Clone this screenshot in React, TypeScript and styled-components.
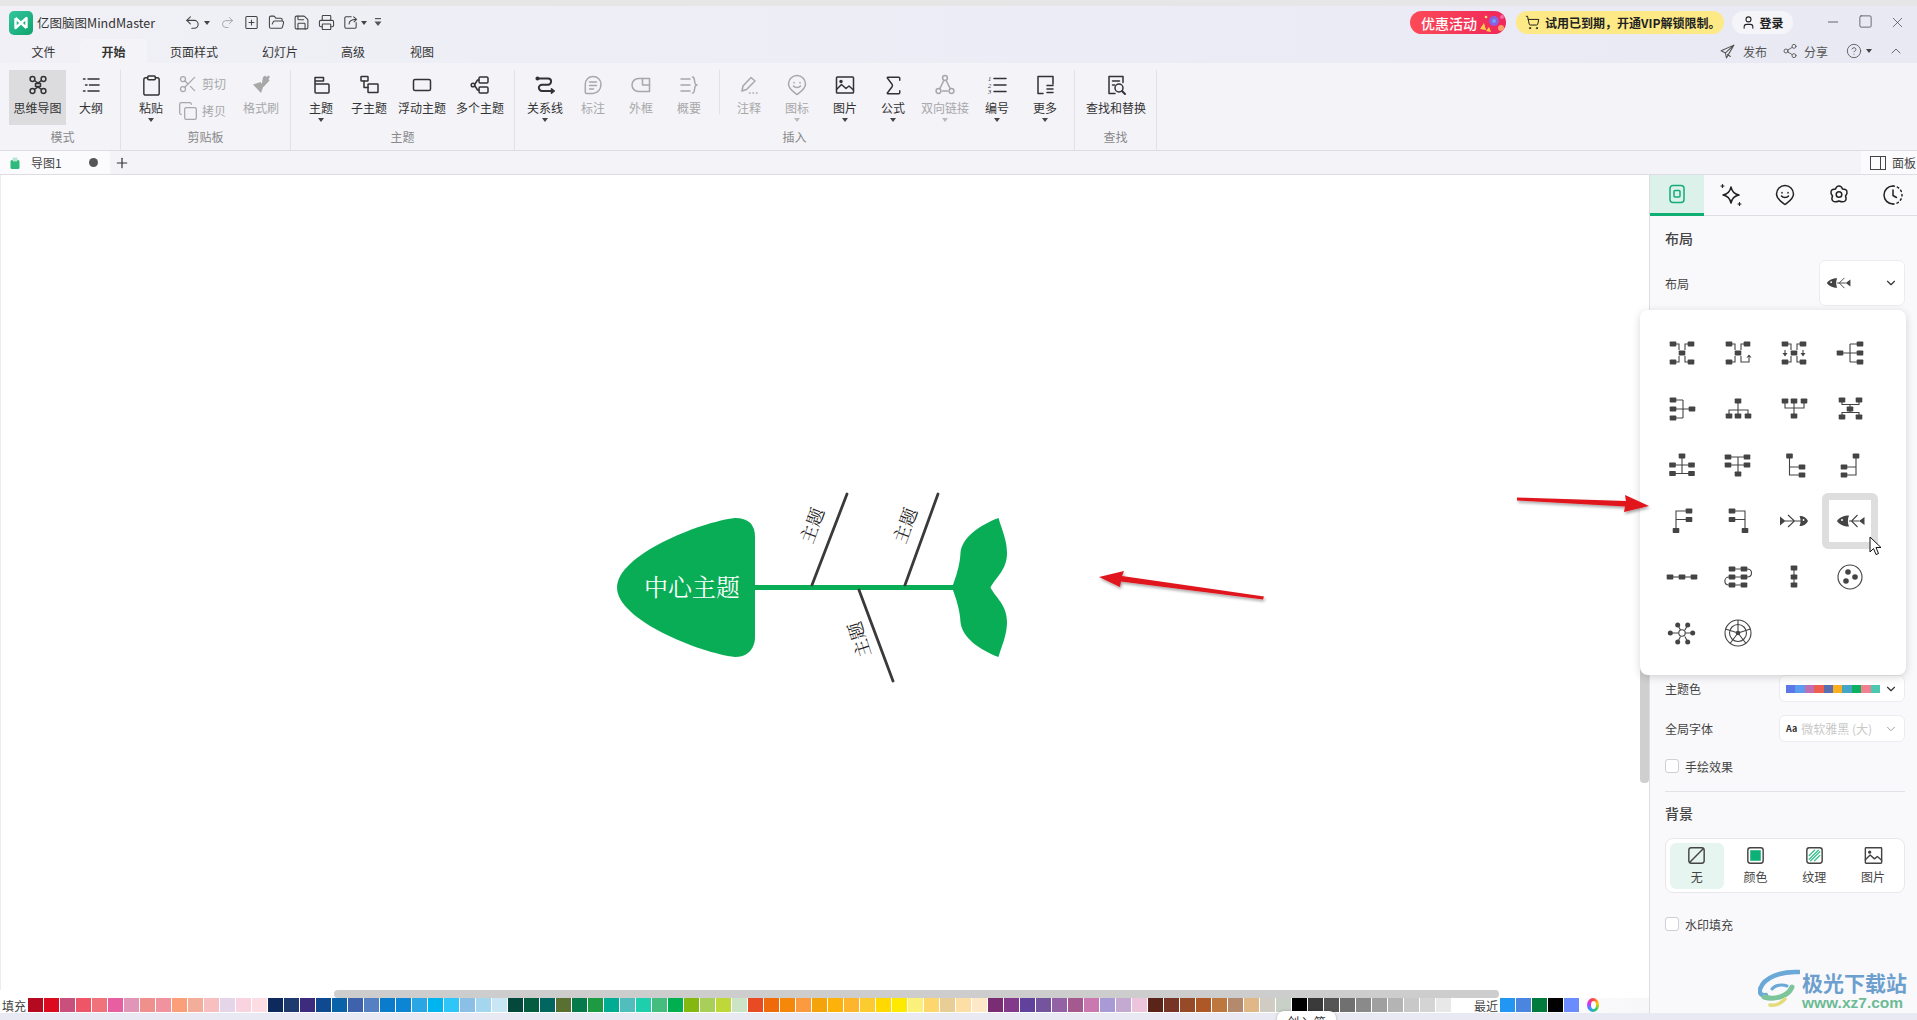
import React from 'react';
import styled, { createGlobalStyle } from 'styled-components';
import {
  ChevronDown,
  ChevronUp,
  CircleHelp,
  Clipboard,
  Copy,
  FolderOpen,
  Image,
  Minus,
  Plus,
  Printer,
  Redo2,
  Save,
  Scissors,
  Share2,
  ShoppingCart,
  Sigma,
  Square,
  Undo2,
  User,
  X,
} from 'lucide-react';

const FONT = '"Noto Sans CJK SC", "Noto Sans", sans-serif';
const SERIF = '"Noto Serif CJK SC", "Liberation Serif", "Noto Sans CJK SC", serif';

const GlobalStyle = createGlobalStyle`
  html, body {
    margin: 0;
    padding: 0;
    background: #fff;
    font-family: ${FONT};
    font-size: 12px;
    color: #333;
  }
  * { box-sizing: border-box; }
`;

const AppShell = styled.div`
  position: relative;
  width: 1917px;
  height: 1020px;
  overflow: hidden;
  display: flex;
  flex-direction: column;
`;

const TopBand = styled.div`
  height: 6px;
  background: #e6e6e6;
`;

const Chrome = styled.div`
  background: linear-gradient(90deg, #f0f0f6 0%, #ebecf5 60%, #e8e9f3 100%);
`;

const TitleBar = styled.div`
  height: 33px;
  display: flex;
  align-items: center;
`;

const LogoBox = styled.div`
  margin-left: 9px;
  width: 24px;
  height: 24px;
  flex: none;
`;

const AppTitle = styled.div`
  margin-left: 4px;
  width: 143px;
  flex: none;
  font-size: 12.5px;
  color: #333;
  white-space: nowrap;
`;

const QuickBtn = styled.div<{ $w?: number; $ml?: number; $off?: boolean }>`
  width: ${(p) => p.$w ?? 25}px;
  margin-left: ${(p) => p.$ml ?? 0}px;
  flex: none;
  display: flex;
  align-items: center;
  justify-content: center;
  color: ${(p) => (p.$off ? '#999' : '#444')};
`;

const Caret = styled.span<{ $off?: boolean }>`
  display: block;
  width: 0;
  height: 0;
  border-left: 3px solid transparent;
  border-right: 3px solid transparent;
  border-top: 4px solid ${(p) => (p.$off ? '#bbb' : '#444')};
`;

const TitleRight = styled.div`
  margin-left: auto;
  display: flex;
  align-items: center;
`;

const PromoPill = styled.div`
  width: 96px;
  height: 23px;
  border-radius: 12px;
  background: linear-gradient(90deg, #fb4a57, #f0275a);
  color: #fff;
  font-size: 14px;
  font-weight: 500;
  display: flex;
  align-items: center;
  padding-left: 11px;
  position: relative;
  overflow: hidden;
  white-space: nowrap;
`;

const Confetti = styled.svg`
  position: absolute;
  right: 0;
  top: 0;
`;

const VipPill = styled.div`
  margin-left: 10px;
  width: 208px;
  height: 23px;
  border-radius: 12px;
  background: #fdea86;
  color: #222;
  font-weight: 700;
  display: flex;
  align-items: center;
  gap: 5px;
  padding-left: 9px;
  white-space: nowrap;
`;

const LoginPill = styled.div`
  margin-left: 8px;
  width: 61px;
  height: 23px;
  border-radius: 12px;
  background: #f4f4f9;
  font-weight: 700;
  color: #222;
  display: flex;
  align-items: center;
  justify-content: center;
  gap: 3px;
`;

const WindowButtons = styled.div`
  margin-left: 24px;
  margin-right: 4px;
  display: flex;
`;

const WindowBtn = styled.div`
  width: 32px;
  display: flex;
  justify-content: center;
  color: #444;
`;

const MenuRow = styled.div`
  height: 24px;
  padding-left: 7px;
  display: flex;
  align-items: stretch;
`;

const MenuTab = styled.div<{ $w: number; $active?: boolean }>`
  width: ${(p) => p.$w}px;
  display: flex;
  align-items: center;
  justify-content: center;
  border-radius: 5px 5px 0 0;
  background: ${(p) => (p.$active ? '#f3f3f8' : 'transparent')};
  font-weight: ${(p) => (p.$active ? 700 : 400)};
  color: #333;
`;

const MenuRight = styled.div`
  margin-left: auto;
  padding-right: 13px;
  display: flex;
  align-items: center;
  color: #555;
`;

const MenuAction = styled.span<{ $ml?: number }>`
  margin-left: ${(p) => p.$ml ?? 0}px;
  display: flex;
  align-items: center;
`;

const Ribbon = styled.div`
  height: 88px;
  padding-top: 7px;
  display: flex;
  background: #f3f3f8;
  border-bottom: 1px solid #dedee2;
`;

const RibbonGroup = styled.div<{ $w: number }>`
  width: ${(p) => p.$w}px;
  flex: none;
  border-right: 1px solid #e2e2e6;
  display: flex;
  flex-direction: column;
`;

const GroupRow = styled.div<{ $pl: number }>`
  height: 55px;
  padding-left: ${(p) => p.$pl}px;
  display: flex;
`;

const GroupLabel = styled.div<{ $shift?: number }>`
  margin-top: 4px;
  height: 16px;
  line-height: 16px;
  text-align: center;
  color: #888;
  padding-left: ${(p) => p.$shift ?? 0}px;
`;

const RibbonItem = styled.div<{ $w: number; $off?: boolean; $on?: boolean }>`
  width: ${(p) => p.$w}px;
  height: 55px;
  flex: none;
  display: flex;
  flex-direction: column;
  align-items: center;
  background: ${(p) => (p.$on ? '#dcdcdf' : 'transparent')};
  color: ${(p) => (p.$off ? '#a8a8a8' : '#333')};
`;

const ItemIcon = styled.div`
  height: 30px;
  display: flex;
  align-items: center;
  justify-content: center;
`;

const ItemLabel = styled.div`
  height: 16px;
  line-height: 16px;
  white-space: nowrap;
`;

const ItemCaret = styled.div`
  height: 8px;
  display: flex;
  align-items: center;
`;

const ClipColumn = styled.div`
  width: 50px;
  margin: 0 8px 0 5px;
  flex: none;
  display: flex;
  flex-direction: column;
`;

const ClipRow = styled.div`
  height: 27px;
  display: flex;
  align-items: center;
  gap: 4px;
  color: #a8a8a8;
`;

const RibbonDivider = styled.div`
  width: 12px;
  height: 44px;
  flex: none;
  display: flex;
  justify-content: center;
  &::before {
    content: '';
    width: 1px;
    background: #e2e2e6;
  }
`;

const DocBar = styled.div`
  height: 24px;
  display: flex;
  justify-content: space-between;
  background: #f3f3f8;
  border-bottom: 1px solid #dedee2;
`;

const DocLeft = styled.div`
  display: flex;
  align-items: center;
`;

const DocTab = styled.div`
  width: 110px;
  height: 23px;
  background: #fbfbfd;
  display: flex;
  align-items: center;
  padding-left: 10px;
  color: #444;
`;

const DocName = styled.span`
  margin-left: 11px;
`;

const DocDot = styled.span`
  margin-left: auto;
  margin-right: 12px;
  width: 9px;
  height: 9px;
  border-radius: 50%;
  background: #555;
`;

const AddDoc = styled.div`
  margin-left: 4px;
  display: flex;
  color: #333;
`;

const PanelToggle = styled.div`
  width: 56px;
  height: 23px;
  background: #fbfbfd;
  display: flex;
  align-items: center;
  padding-left: 9px;
  gap: 6px;
  white-space: nowrap;
  overflow: hidden;
  color: #444;
`;

const Main = styled.div`
  height: 838px;
  display: flex;
`;

const LeftColumn = styled.div`
  flex: 1;
  min-width: 0;
  display: flex;
  flex-direction: column;
`;

const Canvas = styled.div`
  flex: 1;
  position: relative;
  background: #fff;
  border-left: 1px solid #ececec;
`;

const FishDiagram = styled.svg`
  position: absolute;
  left: 599px;
  top: 310px;
`;

const TopicText = styled.text`
  font-family: ${SERIF};
`;

const VScrollThumb = styled.div`
  position: absolute;
  left: 1639px;
  top: 300px;
  width: 9px;
  height: 308px;
  border-radius: 0 0 4px 4px;
  background: #cfcfcf;
`;

const HScrollStrip = styled.div`
  height: 8px;
  padding-left: 334px;
  background: #fff;
`;

const HScrollThumb = styled.div`
  width: 1165px;
  height: 8px;
  border-radius: 4px;
  background: #cdcdcd;
`;

const ColorBar = styled.div`
  height: 15px;
  display: flex;
  background: linear-gradient(90deg, #fff 90%, #f7f7f9 100%);
`;

const ColorLabel = styled.div<{ $w: number; $ml?: number }>`
  width: ${(p) => p.$w}px;
  margin-left: ${(p) => p.$ml ?? 0}px;
  flex: none;
  line-height: 15px;
  padding-left: 2px;
  color: #444;
  white-space: nowrap;
`;

const Swatch = styled.div<{ $c: string }>`
  width: 16px;
  height: 14px;
  flex: none;
  background: ${(p) => p.$c};
  border-right: 1px solid #fff;
`;

const ColorRing = styled.div`
  margin-left: 7px;
  width: 12px;
  height: 14px;
  border-radius: 50%;
  background: conic-gradient(#f44, #fc0, #3c6, #39f, #c3f, #f44);
  display: flex;
  align-items: center;
  justify-content: center;
  &::after {
    content: '';
    width: 5px;
    height: 8px;
    border-radius: 50%;
    background: #fff;
  }
`;

const StatusStrip = styled.div`
  height: 7px;
  background: #e9e9f3;
`;

const Panel = styled.div`
  width: 268px;
  flex: none;
  overflow: hidden;
  background: #f9f9fb;
  border-left: 1px solid #dddde0;
`;

const PanelTabs = styled.div`
  height: 41px;
  display: flex;
  border-bottom: 1px solid #dedee2;
`;

const PanelTab = styled.div<{ $active?: boolean }>`
  width: 54px;
  flex: none;
  height: ${(p) => (p.$active ? 41 : 40)}px;
  display: flex;
  align-items: center;
  justify-content: center;
  color: ${(p) => (p.$active ? '#12ab79' : '#222')};
  background: ${(p) => (p.$active ? '#dcf1ea' : 'transparent')};
  border-bottom: ${(p) => (p.$active ? '3px solid #0fae72' : 'none')};
`;

const PanelBody = styled.div`
  padding: 12px 12px 0 15px;
`;

const SectionTitle = styled.div<{ $mt?: number }>`
  margin-top: ${(p) => p.$mt ?? 0}px;
  height: 20px;
  line-height: 20px;
  font-size: 14px;
  font-weight: 500;
  color: #444;
`;

const FieldRow = styled.div<{ $mt: number; $h: number }>`
  margin-top: ${(p) => p.$mt}px;
  height: ${(p) => p.$h}px;
  display: flex;
  align-items: center;
  justify-content: space-between;
  color: #444;
`;

const SelectBox = styled.div<{ $w: number }>`
  width: ${(p) => p.$w}px;
  height: 100%;
  background: #fff;
  border: 1px solid #ececf0;
  border-radius: 6px;
  display: flex;
  align-items: center;
  padding: 0 6px;
  color: #333;
`;

const SelectChevron = styled.span`
  margin-left: auto;
  display: flex;
`;

const ThemeStrip = styled.div`
  display: flex;
`;

const ThemeChip = styled.div<{ $c: string }>`
  width: 9.4px;
  height: 8px;
  background: ${(p) => p.$c};
`;

const FontHint = styled.span`
  font-size: 9px;
  font-weight: 700;
  margin-right: 4px;
`;

const FontName = styled.span`
  color: #c8c8c8;
`;

const CheckRow = styled.div<{ $mt: number }>`
  margin-top: ${(p) => p.$mt}px;
  height: 16px;
  display: flex;
  align-items: center;
  gap: 6px;
  color: #444;
`;

const CheckBox = styled.span`
  width: 14px;
  height: 14px;
  background: #fff;
  border: 1px solid #cfcfd4;
  border-radius: 3px;
`;

const PanelDivider = styled.div`
  margin-top: 17px;
  height: 1px;
  background: #e2e2e6;
`;

const BgCard = styled.div`
  margin-top: 15px;
  width: 240px;
  height: 55px;
  padding: 4px;
  display: flex;
  gap: 5px;
  background: #fff;
  border: 1px solid #e8e8ec;
  border-radius: 8px;
`;

const BgOption = styled.div<{ $active?: boolean }>`
  width: 54px;
  height: 46px;
  display: flex;
  flex-direction: column;
  align-items: center;
  padding-top: 1px;
  border-radius: 6px;
  background: ${(p) => (p.$active ? '#e6f5ef' : 'transparent')};
  color: #444;
`;

const BgLabel = styled.div`
  margin-top: 2px;
  line-height: 16px;
`;

const LayoutPopup = styled.div`
  position: absolute;
  left: 1640px;
  top: 310px;
  width: 266px;
  height: 365px;
  padding: 15px 0 0 14px;
  display: grid;
  grid-template-columns: repeat(4, 56px);
  grid-auto-rows: 56px;
  background: #fff;
  border-radius: 8px;
  box-shadow: 0 2px 8px rgba(0, 0, 0, 0.16);
`;

const LayoutCell = styled.div<{ $active?: boolean }>`
  display: flex;
  align-items: center;
  justify-content: center;
  color: #444;
  border-radius: 6px;
  border: ${(p) => (p.$active ? '7px solid #dedede' : 'none')};
`;

const PointerCursor = styled.svg`
  position: absolute;
  left: 1869px;
  top: 536px;
`;

const AnnotationLayer = styled.svg`
  position: absolute;
  left: 0;
  top: 0;
  pointer-events: none;
`;

const Tooltip = styled.div`
  position: absolute;
  left: 1277px;
  top: 1011px;
  width: 59px;
  height: 22px;
  background: #fff;
  border-radius: 7px;
  box-shadow: 0 0 3px rgba(0, 0, 0, 0.25);
  text-align: center;
  line-height: 22px;
  white-space: nowrap;
  color: #333;
`;

const Watermark = styled.div`
  position: absolute;
  left: 1758px;
  top: 969px;
  display: flex;
  gap: 2px;
`;

const WatermarkText = styled.div`
  display: flex;
  flex-direction: column;
  margin-top: 1px;
`;

const WatermarkName = styled.div`
  font-size: 21px;
  line-height: 24px;
  font-weight: 700;
  color: #6d9fce;
  white-space: nowrap;
`;

const WatermarkUrl = styled.div`
  font-family: 'Liberation Sans', sans-serif;
  font-size: 15.5px;
  line-height: 18px;
  font-weight: 700;
  color: #6cbb94;
`;

/* ribbon drawings */
const Ico: React.FC<{ size?: number; children: React.ReactNode }> = ({ size = 24, children }) => (
  <svg width={size} height={size} viewBox="0 0 24 24" fill="none" stroke="currentColor" strokeWidth={1.5} strokeLinecap="round" strokeLinejoin="round">
    {children}
  </svg>
);

const MindmapIcon = () => (
  <Ico>
    <circle cx="6.5" cy="6" r="2.4" />
    <circle cx="17.5" cy="6" r="2.4" />
    <circle cx="6.5" cy="18" r="2.4" />
    <circle cx="17.5" cy="18" r="2.4" />
    <path d="M8.5 7.5 12 10l3.5-2.5M8.5 16.5 12 14l3.5 2.5M9.5 10.5h5v3h-5z" />
  </Ico>
);
const OutlineIcon = () => (
  <Ico>
    <path d="M4.5 6H6M9 6h11M6.5 12H8M10.500 12H20M4.500 18H6M9 18h11" />
  </Ico>
);
const TopicIcon = () => (
  <Ico>
    <path d="M6 11V4.500h8.500V8M6 8h8" />
    <rect x="6" y="11" width="14" height="9" rx="1" />
  </Ico>
);
const SubTopicIcon = () => (
  <Ico>
    <rect x="4" y="3.500" width="7" height="4.500" rx="0.600" />
    <path d="M7 8v6.500h4" />
    <rect x="11" y="11" width="10" height="8.500" rx="0.600" />
  </Ico>
);
const FloatIcon = () => (
  <Ico>
    <rect x="3.500" y="6.500" width="17" height="11" rx="1.600" />
  </Ico>
);
const MultiIcon = () => (
  <Ico>
    <rect x="11" y="4" width="9" height="6" rx="1.200" />
    <rect x="11" y="14" width="9" height="6" rx="1.200" />
    <circle cx="5" cy="12" r="1.800" />
    <path d="M11 7H9.500L7 11M11 17H9.500L7 13" />
  </Ico>
);
const RelationIcon = () => (
  <Ico>
    <circle cx="4.500" cy="5.500" r="1.300" fill="currentColor" />
    <path strokeWidth={2} d="M5 5.500h10a3 3 0 0 1 0 6.200H9a3 3 0 0 0 0 6.300h9.500" />
    <path d="m18.500 15.800 2.800 2.200-2.800 2.200z" fill="currentColor" />
  </Ico>
);
const CalloutIcon = () => (
  <Ico>
    <path d="M12 3.500c4.600 0 8 3.200 8 7.800 0 5.200-3.600 9.200-8 9.200H5.500c-.6 0-1.200-.5-1.200-1.200v-8c0-4.600 3.200-7.800 7.700-7.800z" />
    <path d="M8.500 9h7M8.500 12.500h7M8.500 16h4" />
  </Ico>
);
const FrameIcon = () => (
  <Ico>
    <path d="M9.500 5.500h11v13h-11a6.500 6.500 0 0 1 0-13z" />
    <path d="M13.500 5.500V12h7" />
  </Ico>
);
const SummaryIcon = () => (
  <Ico>
    <path d="M4 6h9M4 12h9M4 18h9M15.500 4c3.500 0 .5 8 4.500 8-4 0-1 8-4.500 8" />
  </Ico>
);
const NoteIcon = () => (
  <Ico>
    <path d="m5 18 1-5 8-8.500 4 3.500-8.500 8.500z" />
    <path d="M12.500 20h.5M16 20h.5M19.500 20h.5" />
  </Ico>
);
const PinFaceIcon: React.FC<{ size?: number }> = ({ size }) => (
  <Ico size={size}>
    <path d="M12 2.500a8.500 8.500 0 0 1 8.500 8.500c0 5-4.500 7.500-8.500 10.500C8 18.500 3.500 16 3.500 11A8.500 8.500 0 0 1 12 2.500z" />
    <path d="M9 9.500v.5M15 9.500v.5M8.500 13c1.500 2 5.500 2 7 0" />
  </Ico>
);
const PictureIcon: React.FC<{ size?: number }> = ({ size }) => (
  <Ico size={size}>
    <rect x="3.500" y="4" width="17" height="16" rx="0.800" />
    <circle cx="8" cy="8.500" r="1" fill="currentColor" />
    <path d="m3.500 16.500 5-5 4.500 4 3-2.500 4.500 4" />
  </Ico>
);
const LinkIcon = () => (
  <Ico>
    <circle cx="12" cy="5" r="2.400" />
    <circle cx="5.500" cy="18" r="2.400" />
    <circle cx="18.500" cy="18" r="2.400" />
    <path d="M10.800 7.500 6.700 15.800M13.200 7.500l4.100 8.300M9.500 18h5" />
  </Ico>
);
const NumberingIcon = () => (
  <Ico>
    <path d="M9 5.500h12M9 12h12M9 18.500h12" />
    <text x="3" y="8" fontSize="6.500" fontStyle="italic" fill="currentColor" stroke="none" fontFamily="Liberation Serif">1</text>
    <text x="3" y="14.500" fontSize="6.500" fontStyle="italic" fill="currentColor" stroke="none" fontFamily="Liberation Serif">2</text>
    <text x="3" y="21" fontSize="6.500" fontStyle="italic" fill="currentColor" stroke="none" fontFamily="Liberation Serif">3</text>
  </Ico>
);
const MoreIcon = () => (
  <Ico>
    <path d="M20 11V3.500H5v17h5M14 12.500h6M14 16h6M14 19.500h6" />
  </Ico>
);
const FindIcon = () => (
  <Ico>
    <path d="M19 9.500v-6H5v17h6M8.500 8h7M8.500 12h2" />
    <circle cx="15" cy="15" r="4" />
    <path strokeWidth={2} d="m18 18 3 3" />
  </Ico>
);
const BrushIcon = () => (
  <svg width="24" height="24" viewBox="0 0 24 24" fill="currentColor">
    <path d="m14 4 2-1.500 1.500 1.500 2-1.500 1.500 1.500-1.500 2 1 1.500-6 6.500-2-1.500z" />
    <path d="M11.500 9 4 11.500l8 8.500 2.500-7z" />
  </svg>
);

type RibbonEntry = { label: string; icon: React.ReactNode; w?: number; off?: boolean; caret?: boolean; on?: boolean };

const Item: React.FC<RibbonEntry> = ({ label, icon, w = 48, off, caret, on }) => (
  <RibbonItem $w={w} $off={off} $on={on}>
    <ItemIcon>{icon}</ItemIcon>
    <ItemLabel>{label}</ItemLabel>
    {caret && (
      <ItemCaret>
        <Caret $off={off} />
      </ItemCaret>
    )}
  </RibbonItem>
);

const relationItems: RibbonEntry[] = [
  { label: '关系线', icon: <RelationIcon />, caret: true },
  { label: '标注', icon: <CalloutIcon />, off: true },
  { label: '外框', icon: <FrameIcon />, off: true },
  { label: '概要', icon: <SummaryIcon />, off: true },
];

const insertItems: RibbonEntry[] = [
  { label: '注释', icon: <NoteIcon />, off: true },
  { label: '图标', icon: <PinFaceIcon />, off: true, caret: true },
  { label: '图片', icon: <PictureIcon />, caret: true },
  { label: '公式', icon: <Sigma size={25} strokeWidth={1.4} />, caret: true },
  { label: '双向链接', icon: <LinkIcon />, w: 56, off: true, caret: true },
  { label: '编号', icon: <NumberingIcon />, caret: true },
  { label: '更多', icon: <MoreIcon />, caret: true },
];

const menuTabs = [
  { label: '文件', w: 73 },
  { label: '开始', w: 67, active: true },
  { label: '页面样式', w: 94 },
  { label: '幻灯片', w: 78 },
  { label: '高级', w: 68 },
  { label: '视图', w: 70 },
];

const palette = [
  '#b5091f', '#dc0a1e', '#c94f7c', '#ee5667', '#f0727b', '#e85fa1', '#e196b8', '#f0908c', '#f0939e', '#fb9f7b', '#f2ae9b', '#f7bfc0', '#e5d5e8', '#fad3e1', '#fcdde4',
  '#0e2a5c', '#1f3a6e', '#3d2b7d', '#0f4a90', '#0a62a8', '#3f62ac', '#5580c4', '#0a7ccb', '#0c86d4', '#2aa6e4', '#00b5ef', '#2ec6f8', '#8bbfe6', '#a4d6ef', '#c9e6f4',
  '#03483a', '#045d3e', '#03655f', '#5a6f32', '#067a4b', '#1e9a42', '#00ad93', '#52bdbd', '#1ecfae', '#45bd7e', '#00b050', '#85b711', '#a8cf5a', '#bed739', '#cce3c6',
  '#e84b23', '#ee6a0a', '#f5880a', '#fb9a3e', '#f4a30a', '#fcb20a', '#fdb52e', '#fbcb30', '#ffd900', '#fdea00', '#fcf07c', '#fed66e', '#e8cd96', '#fddea5', '#fde9c8',
  '#7b2d73', '#843a8a', '#60419b', '#75549e', '#9262a4', '#a45a8e', '#c978b0', '#a89ad4', '#c4a9d0', '#ecc4dc',
  '#5a2518', '#773525', '#964a28', '#ae5727', '#bd7840', '#b38a6e', '#e0b888', '#d0ccc4', '#c8d0c8',
  '#000000', '#3a3a3a', '#555555', '#707070', '#8a8a8a', '#a0a0a0', '#b4b4b4', '#c8c8c8', '#d4d4d4', '#e8e8e8',
];

const recentColors = ['#2196f3', '#4a86e0', '#007a3d', '#000000', '#6a8cff'];
const themeColors = ['#5a78e6', '#5b9bf0', '#c06fb0', '#ef5f50', '#5a6fb0', '#fcae1e', '#43a5c8', '#0db060', '#f08090', '#4cc8b0'];

/* layout picker glyphs: nodes are small dark blocks, centres in a 28 box */
type Glyph = { nodes?: [number, number][]; lines?: string; extra?: React.ReactNode };

const hubLines = 'M8 5h3v6M20 5h-3v6M8 23h3v-6';
const fishLeft: Glyph = {
  lines: 'M13 14h10M21.500 8l-6 6 6 6',
  extra: (
    <>
      <path d="M1 14C3 10.500 8 8.500 13 8.500 11.500 12 11.500 16 13 19.500 8 19.500 3 17.500 1 14z" fill="#444" stroke="none" />
      <circle cx="6" cy="13" r="1" fill="#fff" stroke="none" />
      <path d="M23 14l5.500-4v8z" fill="#444" stroke="none" />
    </>
  ),
};
const fishRight: Glyph = {
  lines: 'M5 14h16M8 8l6.500 6-6.500 6',
  extra: (
    <>
      <path d="M28 14C26 10.500 24 9 19.500 9 21 12 21 16 19.500 19 24 19 26 17.500 28 14z" fill="#444" stroke="none" />
      <circle cx="23.500" cy="13" r="0.900" fill="#fff" stroke="none" />
      <path d="M0 9.500l5.500 4.500-5.500 4.500z" fill="#444" stroke="none" />
    </>
  ),
};

const layoutGlyphs: Glyph[] = [
  { nodes: [[5, 5], [23, 5], [14, 14], [5, 23], [23, 23]], lines: hubLines + 'M20 23h-3v-6' },
  {
    nodes: [[5, 5], [23, 5], [14, 14], [5, 23]],
    lines: hubLines + 'M17 17v6h8v-4',
    extra: <path d="M25 15.500l2.500 3h-5z" fill="#444" stroke="none" />,
  },
  {
    nodes: [[5, 5], [23, 5], [14, 14], [5, 23], [23, 23]],
    lines: hubLines + 'M20 23h-3v-6M5 11v5M23 11v5',
    extra: <path d="M2.500 14h5L5 17.500zM20.500 14h5L23 17.500z" fill="#444" stroke="none" />,
  },
  { nodes: [[4, 14], [24, 5], [24, 14], [24, 23]], lines: 'M7 14h14M14 5v18M14 5h7M14 23h7' },
  { nodes: [[5, 5], [5, 14], [5, 23], [24, 14]], lines: 'M8 14h13M15 5v18M8 5h7M8 23h7' },
  { nodes: [[14, 6], [5, 21], [14, 21], [24, 21]], lines: 'M14 8v11M5 19v-4h19v4' },
  { nodes: [[5, 6], [14, 6], [24, 6], [14, 21]], lines: 'M5 8v5h19V8M14 8v11' },
  { nodes: [[6, 5], [23, 5], [14, 14], [6, 22], [23, 22]], lines: 'M6 7v2.500h17V7M14 9.500V12M6 20v-2.500h17V20M14 17.500V16' },
  { nodes: [[14, 5], [4.500, 14], [4.500, 22.500], [23.500, 14], [23.500, 22.500]], lines: 'M14 7v15.500M7 14h14M7 22.500h14' },
  { nodes: [[4, 6], [23, 6], [4, 14], [23, 14], [14, 23]], lines: 'M7 6h13M7 14h13M14 6v15' },
  { nodes: [[9.500, 5], [22, 16], [22, 24]], lines: 'M9.500 7v17h10M9.500 16h10' },
  { nodes: [[20, 5], [8, 16], [8, 24]], lines: 'M20 7v17H10M20 16H10' },
  { nodes: [[21, 4], [21, 12.500], [8, 23.500]], lines: 'M8 21V4h10M8 12.500h10' },
  { nodes: [[8, 4], [8, 12.500], [21, 23.500]], lines: 'M11 4h10v17M11 12.500h10' },
  fishRight,
  fishLeft,
  { nodes: [[2, 14], [14, 14], [26, 14]], lines: 'M5 14h18' },
  {
    nodes: [[8, 6], [20, 6], [8, 14], [20, 14], [8, 22], [20, 22]],
    lines: 'M11 6h6M11 14h6M11 22h6M23 6c6 0 6 8 0 8M5 14c-5.500 0-5.500 8 0 8',
  },
  { nodes: [[14, 5], [14, 14], [14, 22]], lines: 'M14 5v17' },
  {
    extra: (
      <>
        <circle cx="14" cy="14" r="12" fill="none" />
        <circle cx="12" cy="9" r="2.800" fill="#444" stroke="none" />
        <circle cx="19" cy="14" r="2.800" fill="#444" stroke="none" />
        <circle cx="10" cy="18" r="2.800" fill="#444" stroke="none" />
      </>
    ),
  },
  {
    lines: 'M2.300 14h8.500M9.700 6l2.800 5M19.700 6l-2.800 5M24.700 14h-7.700M19.700 23l-2.800-5.500M9.700 23l2.800-5.500',
    extra: (
      <>
        <circle cx="14" cy="14" r="3.200" fill="#fff" />
        {[[2.300, 14], [9.700, 6], [19.700, 6], [24.700, 14], [19.700, 23], [9.700, 23]].map(([x, y]) => (
          <circle key={`${x}-${y}`} cx={x} cy={y} r="2.500" fill="#444" stroke="none" />
        ))}
      </>
    ),
  },
  {
    lines: 'M14 14V1M14 14l12.500-4M14 14l8 10.500M14 14 6 24.500M14 14 1.500 10',
    extra: (
      <>
        <circle cx="14" cy="14" r="13" fill="none" />
        <circle cx="14" cy="14" r="8.500" fill="none" />
        <circle cx="14" cy="14" r="2.300" fill="#444" stroke="none" />
      </>
    ),
  },
];

const LayoutGlyph: React.FC<{ glyph: Glyph; size?: number }> = ({ glyph, size = 28 }) => (
  <svg width={size} height={size} viewBox="0 0 28 28" fill="none" stroke="#444" strokeWidth={1.1} overflow="visible">
    {glyph.lines && <path d={glyph.lines} />}
    {glyph.nodes?.map(([x, y]) => (
      <rect key={`${x}-${y}`} x={x - 3.300} y={y - 2.500} width={6.600} height={5} rx={0.800} fill="#444" stroke="none" />
    ))}
    {glyph.extra}
  </svg>
);

const backgroundOptions = [
  {
    label: '无',
    active: true,
    icon: (
      <Ico size={23}>
        <rect x="4" y="4" width="16" height="16" rx="2.500" />
        <path d="M5 19 19 5" />
      </Ico>
    ),
  },
  {
    label: '颜色',
    icon: (
      <Ico size={23}>
        <rect x="4" y="4" width="16" height="16" rx="2.500" />
        <rect x="6.500" y="6.500" width="11" height="11" fill="#0db076" stroke="none" />
      </Ico>
    ),
  },
  {
    label: '纹理',
    icon: (
      <Ico size={23}>
        <rect x="4" y="4" width="16" height="16" rx="2.500" />
        <path stroke="#3fc191" strokeWidth={1.400} d="M6.500 12 12 6.500M6.500 16 16 6.500M8 17.500 17.500 8M12 17.500l5.500-5.500" />
      </Ico>
    ),
  },
  { label: '图片', icon: <PictureIcon size={23} /> },
];

const App: React.FC = () => {
  return (
    <AppShell>
      <GlobalStyle />
      <TopBand />
      <Chrome>
        <TitleBar>
          <LogoBox>
            <svg width="24" height="24" viewBox="0 0 24 24">
              <defs>
                <linearGradient id="logoFill" x1="0" y1="0" x2="1" y2="1">
                  <stop offset="0" stopColor="#35c6a0" />
                  <stop offset="1" stopColor="#0ea36c" />
                </linearGradient>
              </defs>
              <rect width="24" height="24" rx="5" fill="url(#logoFill)" />
              <path d="M6.500 7v10L17.500 7v10M6.500 7l11 10" fill="none" stroke="#fff" strokeWidth="2.400" strokeLinejoin="round" />
            </svg>
          </LogoBox>
          <AppTitle>亿图脑图MindMaster</AppTitle>
          <QuickBtn $w={24}><Undo2 size={17} strokeWidth={1.5} /></QuickBtn>
          <QuickBtn $w={6}><Caret /></QuickBtn>
          <QuickBtn $w={24} $ml={5} $off><Redo2 size={15} strokeWidth={1.3} /></QuickBtn>
          <QuickBtn>
            <Ico size={17}>
              <rect x="4" y="3.500" width="16" height="17" rx="1.500" />
              <path d="M12 8.500v7M8.500 12h7" />
            </Ico>
          </QuickBtn>
          <QuickBtn><FolderOpen size={17} strokeWidth={1.5} /></QuickBtn>
          <QuickBtn><Save size={17} strokeWidth={1.5} /></QuickBtn>
          <QuickBtn><Printer size={17} strokeWidth={1.5} /></QuickBtn>
          <QuickBtn $w={22}>
            <Ico size={17}>
              <path d="M13 4H5.500A1.500 1.500 0 0 0 4 5.500v13A1.500 1.500 0 0 0 5.500 20h13a1.500 1.500 0 0 0 1.500-1.500V12" />
              <path d="M10 14c0-4 3-6 10-6.500M16.500 4 20.500 7.500 17 11" />
            </Ico>
          </QuickBtn>
          <QuickBtn $w={6}><Caret /></QuickBtn>
          <QuickBtn $w={16} $ml={3}>
            <svg width="8" height="9" viewBox="0 0 8 9" fill="#555">
              <rect x="1" y="0" width="6" height="1.200" />
              <path d="M0.500 3.500h7L4 8z" />
            </svg>
          </QuickBtn>
          <TitleRight>
            <PromoPill>
              优惠活动
              <Confetti width="30" height="23" viewBox="0 0 30 23">
                <circle cx="18" cy="10" r="5" fill="#8d5fe0" />
                <circle cx="18" cy="10" r="2" fill="#6aa4f0" />
                <path d="M4 18l4-6 2 7zM10 20l3-4 2 5z" fill="#fbd34a" />
                <circle cx="25" cy="17" r="3" fill="#f9a06c" />
                <circle cx="26" cy="6" r="2" fill="#f26aa8" />
                <circle cx="10" cy="6" r="1.300" fill="#fde07a" />
              </Confetti>
            </PromoPill>
            <VipPill>
              <ShoppingCart size={15} strokeWidth={1.6} />
              <span>试用已到期，开通VIP解锁限制。</span>
            </VipPill>
            <LoginPill>
              <User size={15} strokeWidth={1.7} />
              登录
            </LoginPill>
            <WindowButtons>
              <WindowBtn><Minus size={16} strokeWidth={1.2} /></WindowBtn>
              <WindowBtn><Square size={15} strokeWidth={1.2} /></WindowBtn>
              <WindowBtn><X size={17} strokeWidth={1} /></WindowBtn>
            </WindowButtons>
          </TitleRight>
        </TitleBar>
        <MenuRow>
          {menuTabs.map((tab) => (
            <MenuTab key={tab.label} $w={tab.w} $active={tab.active}>
              {tab.label}
            </MenuTab>
          ))}
          <MenuRight>
            <MenuAction>
              <Ico size={17}>
                <path d="M21 3 3 11l6 3 1.500 7L21 3zM9 14 21 3M12 16l4 3" />
              </Ico>
            </MenuAction>
            <MenuAction $ml={7}>发布</MenuAction>
            <MenuAction $ml={15}><Share2 size={16} strokeWidth={1.3} /></MenuAction>
            <MenuAction $ml={6}>分享</MenuAction>
            <MenuAction $ml={18}><CircleHelp size={16} strokeWidth={1.3} /></MenuAction>
            <MenuAction $ml={4}><Caret /></MenuAction>
            <MenuAction $ml={16}><ChevronUp size={16} strokeWidth={1.3} /></MenuAction>
          </MenuRight>
        </MenuRow>
      </Chrome>
      <Ribbon>
        <RibbonGroup $w={121}>
          <GroupRow $pl={9}>
            <Item label="思维导图" icon={<MindmapIcon />} w={57} on />
            <Item label="大纲" icon={<OutlineIcon />} w={50} />
          </GroupRow>
          <GroupLabel $shift={5}>模式</GroupLabel>
        </RibbonGroup>
        <RibbonGroup $w={170}>
          <GroupRow $pl={8}>
            <Item label="粘贴" icon={<Clipboard size={23} strokeWidth={1.5} />} w={44} caret />
            <ClipColumn>
              <ClipRow>
                <Scissors size={20} strokeWidth={1.5} />
                剪切
              </ClipRow>
              <ClipRow>
                <Copy size={20} strokeWidth={1.5} />
                拷贝
              </ClipRow>
            </ClipColumn>
            <Item label="格式刷" icon={<BrushIcon />} w={50} off />
          </GroupRow>
          <GroupLabel>剪贴板</GroupLabel>
        </RibbonGroup>
        <RibbonGroup $w={224}>
          <GroupRow $pl={6}>
            <Item label="主题" icon={<TopicIcon />} caret />
            <Item label="子主题" icon={<SubTopicIcon />} />
            <Item label="浮动主题" icon={<FloatIcon />} w={58} />
            <Item label="多个主题" icon={<MultiIcon />} w={58} />
          </GroupRow>
          <GroupLabel>主题</GroupLabel>
        </RibbonGroup>
        <RibbonGroup $w={560}>
          <GroupRow $pl={6}>
            {relationItems.map((item) => (
              <Item key={item.label} {...item} />
            ))}
            <RibbonDivider />
            {insertItems.map((item) => (
              <Item key={item.label} {...item} />
            ))}
          </GroupRow>
          <GroupLabel>插入</GroupLabel>
        </RibbonGroup>
        <RibbonGroup $w={82}>
          <GroupRow $pl={6}>
            <Item label="查找和替换" icon={<FindIcon />} w={70} />
          </GroupRow>
          <GroupLabel>查找</GroupLabel>
        </RibbonGroup>
      </Ribbon>
      <DocBar>
        <DocLeft>
          <DocTab>
            <svg width="10" height="12" viewBox="0 0 10 12">
              <rect x="0.500" y="3" width="9" height="9" rx="1.500" fill="#2fb97a" />
              <rect x="2.500" y="0.500" width="5" height="4" rx="1" fill="#b6e6cf" />
            </svg>
            <DocName>导图1</DocName>
            <DocDot />
          </DocTab>
          <AddDoc><Plus size={16} strokeWidth={1.8} /></AddDoc>
        </DocLeft>
        <PanelToggle>
          <svg width="16" height="14" viewBox="0 0 16 14" fill="none" stroke="#444">
            <rect x="0.500" y="0.500" width="15" height="13" />
            <path d="M10.500 0.500v13" />
          </svg>
          面板
        </PanelToggle>
      </DocBar>
      <Main>
        <LeftColumn>
          <Canvas>
            <FishDiagram width="420" height="210" viewBox="0 0 420 210">
              <path
                d="M155 52Q155 33 135 33C100 37 17 70 17 102.500 17 135 100 168 135 172 155 172 155 153 155 153Z"
                fill="#08ad56"
              />
              <path d="M155 102.500H354" stroke="#08ad56" strokeWidth="5" />
              <path
                d="M352 102.500C356 92 360 80 360.500 68 362 52 380 40 398.500 33 402 45 407 55 407 68 407 85 396 92 390.500 102.500 396 113 407 120 407 137 407 150 402 160 398.500 172 380 165 362 153 360.500 137 360 125 356 113 352 102.500Z"
                fill="#08ad56"
              />
              <path d="M247 9 212 100M338 9 305 100M259 105 293 196" stroke="#3a3a3a" strokeWidth="2.800" strokeLinecap="round" fill="none" />
              <TopicText x="92" y="100" fill="#fff" fontSize="24" textAnchor="middle" dominantBaseline="central">中心主题</TopicText>
              <TopicText x="211" y="40" fontSize="18" fill="#222" textAnchor="middle" dominantBaseline="central" transform="rotate(-70 211 40)">主题</TopicText>
              <TopicText x="304" y="40" fontSize="18" fill="#222" textAnchor="middle" dominantBaseline="central" transform="rotate(-70 304 40)">主题</TopicText>
              <TopicText x="258" y="155" fontSize="18" fill="#222" textAnchor="middle" dominantBaseline="central" transform="rotate(-108 258 155)">主题</TopicText>
            </FishDiagram>
            <VScrollThumb />
          </Canvas>
          <HScrollStrip>
            <HScrollThumb />
          </HScrollStrip>
          <ColorBar>
            <ColorLabel $w={28}>填充</ColorLabel>
            {palette.map((color, i) => (
              <Swatch key={`${color}-${i}`} $c={color} />
            ))}
            <ColorLabel $w={28} $ml={20}>最近</ColorLabel>
            {recentColors.map((color) => (
              <Swatch key={color} $c={color} />
            ))}
            <ColorRing />
          </ColorBar>
        </LeftColumn>
        <Panel>
          <PanelTabs>
            <PanelTab $active>
              <Ico>
                <rect x="5" y="3.500" width="14" height="17" rx="3" />
                <rect x="9" y="8.500" width="6" height="6.500" rx="1" />
              </Ico>
            </PanelTab>
            <PanelTab>
              <Ico>
                <path d="M12 4c1 5 3 7 8 8-5 1-7 3-8 8-1-5-3-7-8-8 5-1 7-3 8-8z" />
                <path d="M3.500 1.500v3M2 3h3M20.500 19.500v3M19 21h3" strokeWidth={1.200} />
              </Ico>
            </PanelTab>
            <PanelTab><PinFaceIcon /></PanelTab>
            <PanelTab>
              <Ico>
                <path d="M12 3c2 0 3 1.500 3.500 3 1.800 0 4 .5 4.500 2.500.5 1.800-.5 3.200-1.500 4.500.8 1.800 1 3.500-.5 5-1.500 1.300-4 .8-6 0-2 .8-4.500 1.300-6 0-1.500-1.500-1.300-3.200-.5-5C4.500 11.700 3.500 10.300 4 8.500 4.500 6.500 6.700 6 8.500 6 9 4.500 10 3 12 3z" />
                <circle cx="12" cy="11.500" r="2.800" />
              </Ico>
            </PanelTab>
            <PanelTab>
              <Ico>
                <path d="M12 3a9 9 0 0 0 0 18" />
                <path d="M12 7v5.500l3.500 2" />
                <path strokeDasharray="1.500 3" d="M12 3a9 9 0 0 1 0 18" />
              </Ico>
            </PanelTab>
          </PanelTabs>
          <PanelBody>
            <SectionTitle>布局</SectionTitle>
            <FieldRow $mt={12} $h={46}>
              布局
              <SelectBox $w={86}>
                <LayoutGlyph glyph={fishLeft} size={24} />
                <SelectChevron><ChevronDown size={14} strokeWidth={2} /></SelectChevron>
              </SelectBox>
            </FieldRow>
            <FieldRow $mt={369} $h={27}>
              主题色
              <SelectBox $w={126}>
                <ThemeStrip>
                  {themeColors.map((color) => (
                    <ThemeChip key={color} $c={color} />
                  ))}
                </ThemeStrip>
                <SelectChevron><ChevronDown size={14} strokeWidth={2} /></SelectChevron>
              </SelectBox>
            </FieldRow>
            <FieldRow $mt={13} $h={27}>
              全局字体
              <SelectBox $w={126}>
                <FontHint>Aa</FontHint>
                <FontName>微软雅黑 (大)</FontName>
                <SelectChevron><ChevronDown size={14} strokeWidth={1.6} color="#999" /></SelectChevron>
              </SelectBox>
            </FieldRow>
            <CheckRow $mt={16}>
              <CheckBox />
              手绘效果
            </CheckRow>
            <PanelDivider />
            <SectionTitle $mt={11}>背景</SectionTitle>
            <BgCard>
              {backgroundOptions.map((option) => (
                <BgOption key={option.label} $active={option.active}>
                  {option.icon}
                  <BgLabel>{option.label}</BgLabel>
                </BgOption>
              ))}
            </BgCard>
            <CheckRow $mt={23}>
              <CheckBox />
              水印填充
            </CheckRow>
          </PanelBody>
        </Panel>
      </Main>
      <StatusStrip />

      <LayoutPopup>
        {layoutGlyphs.map((glyph, i) => (
          <LayoutCell key={i} $active={glyph === fishLeft}>
            <LayoutGlyph glyph={glyph} />
          </LayoutCell>
        ))}
      </LayoutPopup>
      <PointerCursor width="13" height="20" viewBox="0 0 13 20">
        <path d="M1 1v15l3.500-3.500 2.500 6 2.500-1-2.500-6h5z" fill="#fff" stroke="#111" strokeWidth="1" />
      </PointerCursor>
      <AnnotationLayer width="1917" height="1020" viewBox="0 0 1917 1020">
        <defs>
          <filter id="arrowShadow" x="-10%" y="-60%" width="120%" height="220%">
            <feDropShadow dx="1" dy="2" stdDeviation="1.500" floodColor="#000" floodOpacity="0.35" />
          </filter>
        </defs>
        <path d="M1517 497.500 1626 501 1625 495 1649 506 1624 512 1625 506.500 1517 500.500Z" fill="#e0141e" filter="url(#arrowShadow)" />
        <path d="M1264 596.500 1122 576 1124 571 1099 577 1120 587 1121 581.500 1263 599.500Z" fill="#e0141e" filter="url(#arrowShadow)" />
      </AnnotationLayer>
      <Tooltip>创入 第</Tooltip>
      <Watermark>
        <svg width="42" height="40" viewBox="0 0 42 40" fill="none">
          <path d="M41 3C24 2 6 8 2 20c-1 5 2 7 6 6" stroke="#6aa8d8" strokeWidth="4.500" strokeLinecap="round" />
          <path d="M6 28c10 3 24 0 28-10" stroke="#7cc49a" strokeWidth="5" strokeLinecap="round" />
          <path d="M12 36c6 1 12-2 15-6" stroke="#e4dc7a" strokeWidth="3.500" strokeLinecap="round" />
          <path d="M14 20c3-4 10-5 15-3" stroke="#6aa8d8" strokeWidth="3" strokeLinecap="round" />
        </svg>
        <WatermarkText>
          <WatermarkName>极光下载站</WatermarkName>
          <WatermarkUrl>www.xz7.com</WatermarkUrl>
        </WatermarkText>
      </Watermark>
    </AppShell>
  );
};

export default App;
